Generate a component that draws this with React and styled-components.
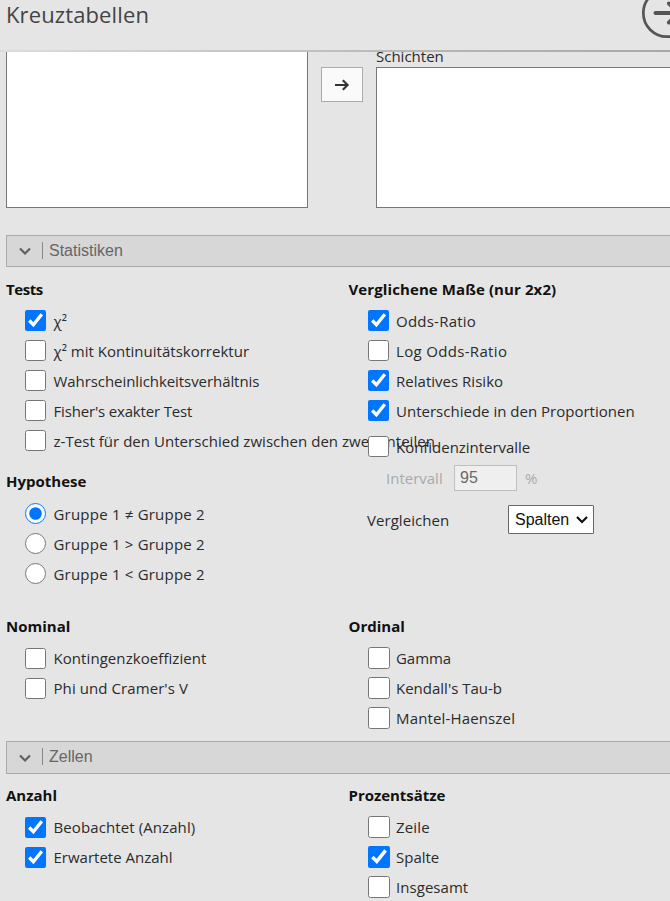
import React from 'react';
import styled, { createGlobalStyle } from 'styled-components';

const GlobalStyle = createGlobalStyle`
  * { box-sizing: border-box; }
  body { margin: 0; background: #e5e5e5; overflow: hidden; }
`;

const Page = styled.div`
  height: 901px;
  width: 670px;
  overflow: hidden;
  display: flex;
  flex-direction: column;
  background: #e5e5e5;
  color: #2b2b2b;
  font: 15px/24px 'Open Sans', 'Segoe UI', sans-serif;
  white-space: nowrap;
`;

const Header = styled.header`
  display: flex;
  justify-content: space-between;
  flex: none;
  height: 50px;
  padding-left: 6px;
`;

const Title = styled.h1`
  margin: 0;
  font-size: 22px;
  line-height: 28px;
  font-weight: 400;
  letter-spacing: 0.12px;
  color: #444;
`;

const HeaderIcon = styled.svg`
  display: block;
  flex: none;
  width: 30px;
  height: 40px;
`;

const HeaderRule = styled.div`
  flex: none;
  height: 2px;
  background: linear-gradient(90deg, #dcdcdc, #b8b8b8 60%, #a8a8a8);
`;

const Content = styled.main`
  flex: 1;
  min-height: 0;
  overflow: hidden;
  padding-left: 6px;
`;

const Assigner = styled.div`
  display: grid;
  grid-template-columns: 302px 42px 320px;
  column-gap: 13px;
  height: 156px;
`;

const SourceList = styled.div`
  background: #fff;
  border: 1px solid #777;
  border-top: 0;
`;

const MoveButton = styled.button`
  display: flex;
  align-items: center;
  justify-content: center;
  width: 42px;
  height: 35px;
  margin-top: 15px;
  padding: 0;
  background: #fafafa;
  border: 1px solid #aaa;
`;

const Target = styled.div`
  display: flex;
  flex-direction: column;
`;

const TargetLabel = styled.div`
  flex: none;
  height: 23px;
  margin-top: -8px;
`;

const TargetList = styled.div`
  flex: 1;
  background: #fff;
  border: 1px solid #777;
`;

const Bar = styled.div`
  display: flex;
  align-items: flex-start;
  width: 700px;
  height: ${(p) => p.$height}px;
  margin-top: ${(p) => p.$top}px;
  padding: 6px 0 0 12px;
  background: #d7d7d7;
  border: 1px solid #aaa;
`;

const Chevron = styled.svg`
  width: 12px;
  height: 10px;
  margin-top: ${(p) => p.$drop}px;
`;

const BarTitle = styled.span`
  height: 17px;
  margin-left: 11px;
  padding-left: 6px;
  border-left: 1px solid #888;
  font: 16px/17px 'Liberation Sans', Arial, sans-serif;
  color: #666;
`;

const Columns = styled.div`
  display: grid;
  grid-template-columns: 342.5px 321px;
  height: ${(p) => p.$height}px;
  padding-top: ${(p) => p.$top}px;
`;

const Column = styled.section`
  min-width: 0;
`;

const Heading = styled.h2`
  margin: ${(p) => p.$top || 0}px 0 ${(p) => p.$gap || 5}px;
  font-size: 15px;
  line-height: 24px;
  font-weight: 700;
  letter-spacing: ${(p) => p.$track || 0}px;
  color: #111;
`;

const Options = styled.div`
  line-height: ${(p) => p.$line || 32}px;
`;

const Row = styled.label`
  display: flex;
  align-items: flex-start;
  height: 30px;
  margin-top: ${(p) => p.$top || 0}px;
  padding-left: 19px;
`;

const Mark = styled.input`
  flex: none;
  width: ${(p) => p.$size}px;
  height: ${(p) => p.$size}px;
  margin: ${(p) => 26 - p.$size}px ${(p) => 28.5 - p.$size}px 0 0;
`;

const Text = styled.span`
  letter-spacing: ${(p) => p.$track || 0}px;
`;

const IntervalRow = styled.div`
  display: flex;
  align-items: center;
  height: 26px;
  margin-top: 4px;
  padding-left: 37.5px;
  color: #aaa;
`;

const IntervalLabel = styled.span`
  width: 68px;
`;

const IntervalInput = styled.input`
  width: 63px;
  height: 26px;
  margin: 0 8px 0 0;
  padding: 0 5px;
  background: #efefef;
  border: 1px solid #bebebe;
  font: 16px 'Liberation Sans', Arial, sans-serif;
  color: #6a6a6a;
`;

const CompareRow = styled.div`
  display: flex;
  align-items: center;
  height: 29px;
  margin-top: 14px;
  padding-left: 18.5px;
`;

const CompareLabel = styled.span`
  width: 141px;
  letter-spacing: 0.05px;
`;

const SelectBox = styled.span`
  position: relative;
  display: block;
  width: 86px;
  height: 29px;
`;

const CompareSelect = styled.select`
  appearance: none;
  display: block;
  width: 86px;
  height: 29px;
  margin: 0;
  padding: 0 0 0 6px;
  background: #fff;
  border: 1px solid #666;
  border-radius: 1px;
  font: 16px 'Liberation Sans', Arial, sans-serif;
  color: #111;
`;

const SelectArrow = styled.svg`
  position: absolute;
  right: 6px;
  top: 10px;
  width: 12px;
  height: 10px;
  pointer-events: none;
`;

const Option = ({ text, track, checked, type = 'checkbox', name, size = 21, top }) => (
  <Row $top={top}>
    <Mark type={type} name={name} defaultChecked={checked} $size={size} />
    <Text $track={track}>{text}</Text>
  </Row>
);

const SectionBar = ({ title, height, top, drop }) => (
  <Bar $height={height} $top={top}>
    <Chevron viewBox="0 0 12 10" fill="none" $drop={drop}>
      <path d="M1 2.5 6 7.5 11 2.5" stroke="#606060" strokeWidth="2.2" />
    </Chevron>
    <BarTitle>{title}</BarTitle>
  </Bar>
);

export default function App() {
  return (
    <Page>
      <GlobalStyle />
      <Header>
        <Title>Kreuztabellen</Title>
        <HeaderIcon viewBox="0 0 30 40" fill="none" stroke="#555">
          <circle cx="27" cy="13" r="23.7" strokeWidth="2.7" />
          <path d="M15.5 13H39M29 3.5 39 13 29 22.5" strokeWidth="4" strokeLinecap="round" />
        </HeaderIcon>
      </Header>
      <HeaderRule />
      <Content>
        <Assigner>
          <SourceList />
          <MoveButton aria-label="Zuweisen">
            <svg width="16" height="14" viewBox="0 0 16 14" fill="none" stroke="#333" strokeWidth="2.1">
              <path d="M1 7H14M8.8 2.2 13.6 7 8.8 11.8" />
            </svg>
          </MoveButton>
          <Target>
            <TargetLabel>Schichten</TargetLabel>
            <TargetList />
          </Target>
        </Assigner>

        <SectionBar title="Statistiken" height={32} top={27} drop={4} />
        <Columns $top={10} $height={347}>
          <Column>
            <Heading $gap={4} $track={-0.45}>Tests</Heading>
            <Options>
              <Option text="χ²" checked />
              <Option text="χ² mit Kontinuitätskorrektur" track={0.01} />
              <Option text="Wahrscheinlichkeitsverhältnis" track={-0.07} />
              <Option text="Fisher's exakter Test" track={-0.17} />
              <Option text="z-Test für den Unterschied zwischen den zwei Anteilen" track={0.04} />
            </Options>
            <Heading $top={14}>Hypothese</Heading>
            <Options>
              <Option type="radio" name="hyp" text="Gruppe 1 ≠ Gruppe 2" track={0.21} checked />
              <Option type="radio" name="hyp" text="Gruppe 1 > Gruppe 2" track={0.21} />
              <Option type="radio" name="hyp" text="Gruppe 1 < Gruppe 2" track={0.21} />
            </Options>
          </Column>
          <Column>
            <Heading $gap={4} $track={0.1}>Verglichene Maße (nur 2x2)</Heading>
            <Options>
              <Option text="Odds-Ratio" track={0.23} checked />
              <Option text="Log Odds-Ratio" track={0.33} />
              <Option text="Relatives Risiko" track={0.02} checked />
              <Option text="Unterschiede in den Proportionen" track={0.01} checked />
              <Option text="Konfidenzintervalle" top={6} track={-0.03} />
            </Options>
            <IntervalRow>
              <IntervalLabel>Intervall</IntervalLabel>
              <IntervalInput defaultValue="95" disabled />
              <span>%</span>
            </IntervalRow>
            <CompareRow>
              <CompareLabel>Vergleichen</CompareLabel>
              <SelectBox>
                <CompareSelect defaultValue="Spalten">
                  <option>Spalten</option>
                </CompareSelect>
                <SelectArrow viewBox="0 0 12 10" fill="none">
                  <path d="M1 2 6 7 11 2" stroke="#111" strokeWidth="2.2" />
                </SelectArrow>
              </SelectBox>
            </CompareRow>
          </Column>
        </Columns>
        <Columns $top={0} $height={127}>
          <Column>
            <Heading>Nominal</Heading>
            <Options $line={30}>
              <Option text="Kontingenzkoeffizient" track={0.07} />
              <Option text="Phi und Cramer's V" track={0.08} />
            </Options>
          </Column>
          <Column>
            <Heading>Ordinal</Heading>
            <Options $line={30}>
              <Option size={22} text="Gamma" track={-0.05} />
              <Option size={22} text="Kendall's Tau-b" />
              <Option size={22} text="Mantel-Haenszel" track={0.15} />
            </Options>
          </Column>
        </Columns>

        <SectionBar title="Zellen" height={33} top={0} drop={5} />
        <Columns $top={9} $height={127}>
          <Column>
            <Heading>Anzahl</Heading>
            <Options $line={30}>
              <Option text="Beobachtet (Anzahl)" track={0.1} checked />
              <Option text="Erwartete Anzahl" checked />
            </Options>
          </Column>
          <Column>
            <Heading $track={-0.04}>Prozentsätze</Heading>
            <Options $line={30}>
              <Option size={22} text="Zeile" track={0.15} />
              <Option size={22} text="Spalte" checked />
              <Option size={22} text="Insgesamt" track={0.05} />
            </Options>
          </Column>
        </Columns>
      </Content>
    </Page>
  );
}
